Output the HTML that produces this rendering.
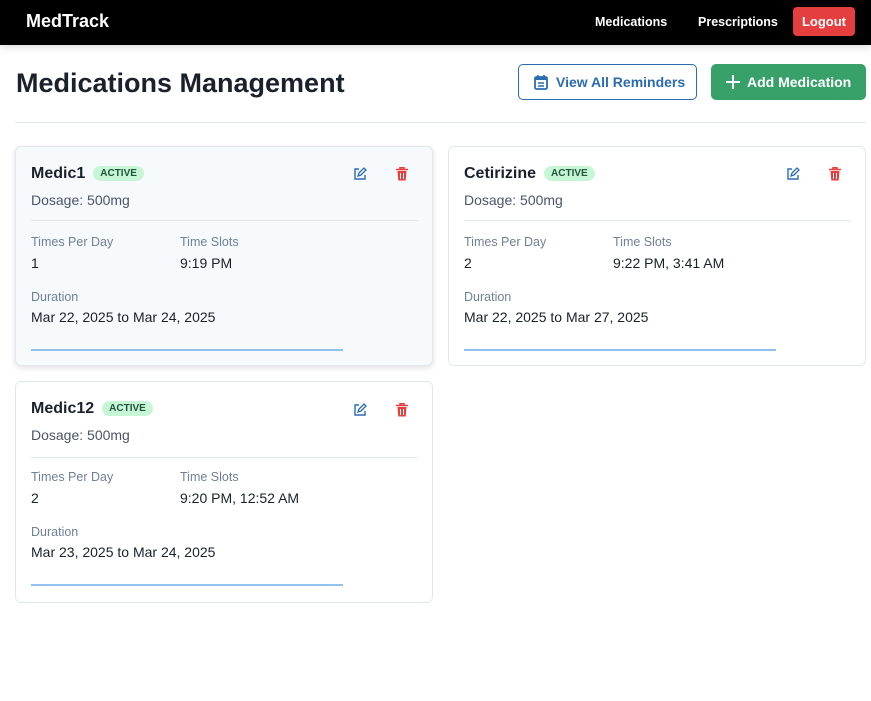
<!DOCTYPE html>
<html><head><style>
*{box-sizing:border-box;margin:0;padding:0}
body{width:871px;height:701px;background:#fff;font-family:"Liberation Sans",sans-serif;color:#1a202c;position:relative;overflow:hidden}
.nav{position:absolute;left:0;top:0;width:871px;height:45px;background:#000;box-shadow:0 2px 8px rgba(0,0,0,.15)}
.brand{position:absolute;left:26px;top:11px;color:#fff;font-weight:bold;font-size:18px}
.nl{position:absolute;top:15px;color:#fff;font-size:12.5px;font-weight:bold}
.logout{position:absolute;left:793px;top:7px;width:62px;height:29px;background:#e53e3e;border-radius:4px;color:#fff;font-size:13px;font-weight:bold;text-align:center;line-height:29px}
h1{position:absolute;left:16px;top:68px;font-size:27px;font-weight:bold;color:#1a202c}
.b1{position:absolute;left:518px;top:64px;width:179px;height:36px;border:1px solid #2b6cb0;border-radius:5px;color:#2b6cb0;font-size:14px;font-weight:bold;line-height:34px;padding-left:37px}
.b2{position:absolute;left:711px;top:64px;width:155px;height:36px;background:#38a169;border-radius:5px;color:#fff;font-size:14px;font-weight:bold;line-height:36px;padding-left:36px}
.hr{position:absolute;left:15px;top:122px;width:851px;height:1px;background:#e2e8f0}
.card{position:absolute;width:418px;height:220px;border:1px solid #e2e8f0;border-radius:6px;background:#fff}
.card.hl{background:#f7fafc;box-shadow:0 2px 6px rgba(0,0,0,.12)}
.name{position:absolute;left:15px;top:18px;font-size:16px;font-weight:bold}
.badge{display:inline-block;margin-left:8px;background:#c6f6d5;color:#22543d;font-size:10px;font-weight:bold;padding:2px 7px;border-radius:8px;vertical-align:2px}
.dos{position:absolute;left:15px;top:45px;font-size:14px;color:#4a5568}
.ln{position:absolute;left:15px;top:73px;width:387px;height:1px;background:#e2e8f0}
.lb{position:absolute;font-size:12.5px;color:#718096}
.vl{position:absolute;font-size:14px;color:#1a202c}
.bar{position:absolute;left:15px;top:202px;width:312px;height:2px;background:#90c2ec}
.ic{position:absolute;top:20px}
</style></head><body>
<div class="nav"><div class="brand">MedTrack</div>
<div class="nl" style="left:595px">Medications</div><div class="nl" style="left:698px">Prescriptions</div>
<div class="logout">Logout</div></div>
<h1>Medications Management</h1>
<div class="b1"><svg style="position:absolute;left:15px;top:10px" width="14" height="15" viewBox="0 0 14 15"><rect x="1" y="2" width="12" height="12" rx="1.5" fill="none" stroke="#2b6cb0" stroke-width="1.8"/><rect x="1" y="2" width="12" height="3" fill="#2b6cb0"/><path d="M4 0v3M10 0v3M4 8h6M4 11h6" stroke="#2b6cb0" stroke-width="1.6"/></svg>View All Reminders</div>
<div class="b2"><svg style="position:absolute;left:14px;top:10px" width="16" height="16"><path d="M8 1v14M1 8h14" stroke="#fff" stroke-width="2"/></svg>Add Medication</div>
<div class="hr"></div>

<div class="card hl" style="left:15px;top:146px">
<div class="name">Medic1<span class="badge">ACTIVE</span></div>
<div class="dos">Dosage: 500mg</div><div class="ln"></div>
<div class="lb" style="left:15px;top:88px">Times Per Day</div><div class="lb" style="left:164px;top:88px">Time Slots</div>
<div class="vl" style="left:15px;top:108px">1</div><div class="vl" style="left:164px;top:108px">9:19 PM</div>
<div class="lb" style="left:15px;top:143px">Duration</div>
<div class="vl" style="left:15px;top:162px">Mar 22, 2025 to Mar 24, 2025</div>
<div class="bar"></div>
<svg class="ic" style="left:337px" width="14" height="14" viewBox="0 0 14 14"><path d="M6 2H2v10h10V8" fill="none" stroke="#2b6cb0" stroke-width="1.4"/><path d="M5 9l1-3 5-5 2 2-5 5z" fill="none" stroke="#2b6cb0" stroke-width="1.3"/></svg>
<svg class="ic" style="left:380px" width="12" height="14" viewBox="0 0 12 14"><path d="M0 2.5h12M4 2V0.8h4V2" stroke="#e53e3e" stroke-width="1.5" fill="none"/><path d="M1.5 4h9l-.8 9.5H2.3z" fill="#e53e3e"/><path d="M4.5 6v6M7.5 6v6" stroke="#f7fafc" stroke-width="1"/></svg>
</div>

<div class="card" style="left:448px;top:146px">
<div class="name">Cetirizine<span class="badge">ACTIVE</span></div>
<div class="dos">Dosage: 500mg</div><div class="ln"></div>
<div class="lb" style="left:15px;top:88px">Times Per Day</div><div class="lb" style="left:164px;top:88px">Time Slots</div>
<div class="vl" style="left:15px;top:108px">2</div><div class="vl" style="left:164px;top:108px">9:22 PM, 3:41 AM</div>
<div class="lb" style="left:15px;top:143px">Duration</div>
<div class="vl" style="left:15px;top:162px">Mar 22, 2025 to Mar 27, 2025</div>
<div class="bar"></div>
<svg class="ic" style="left:337px" width="14" height="14" viewBox="0 0 14 14"><path d="M6 2H2v10h10V8" fill="none" stroke="#2b6cb0" stroke-width="1.4"/><path d="M5 9l1-3 5-5 2 2-5 5z" fill="none" stroke="#2b6cb0" stroke-width="1.3"/></svg>
<svg class="ic" style="left:380px" width="12" height="14" viewBox="0 0 12 14"><path d="M0 2.5h12M4 2V0.8h4V2" stroke="#e53e3e" stroke-width="1.5" fill="none"/><path d="M1.5 4h9l-.8 9.5H2.3z" fill="#e53e3e"/><path d="M4.5 6v6M7.5 6v6" stroke="#fff" stroke-width="1"/></svg>
</div>

<div class="card" style="left:15px;top:381px;height:222px">
<div class="name" style="top:18px">Medic12<span class="badge">ACTIVE</span></div>
<div class="dos" style="top:45px">Dosage: 500mg</div><div class="ln" style="top:75px"></div>
<div class="lb" style="left:15px;top:88px">Times Per Day</div><div class="lb" style="left:164px;top:88px">Time Slots</div>
<div class="vl" style="left:15px;top:108px">2</div><div class="vl" style="left:164px;top:108px">9:20 PM, 12:52 AM</div>
<div class="lb" style="left:15px;top:143px">Duration</div>
<div class="vl" style="left:15px;top:162px">Mar 23, 2025 to Mar 24, 2025</div>
<div class="bar" style="top:202px"></div>
<svg class="ic" style="left:337px;top:21px" width="14" height="14" viewBox="0 0 14 14"><path d="M6 2H2v10h10V8" fill="none" stroke="#2b6cb0" stroke-width="1.4"/><path d="M5 9l1-3 5-5 2 2-5 5z" fill="none" stroke="#2b6cb0" stroke-width="1.3"/></svg>
<svg class="ic" style="left:380px;top:21px" width="12" height="14" viewBox="0 0 12 14"><path d="M0 2.5h12M4 2V0.8h4V2" stroke="#e53e3e" stroke-width="1.5" fill="none"/><path d="M1.5 4h9l-.8 9.5H2.3z" fill="#e53e3e"/><path d="M4.5 6v6M7.5 6v6" stroke="#fff" stroke-width="1"/></svg>
</div>
</body></html>
